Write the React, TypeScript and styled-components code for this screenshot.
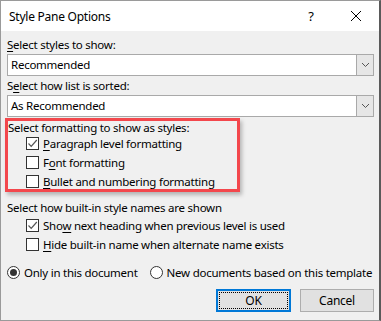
import React from "react";
import styled, { createGlobalStyle } from "styled-components";

const Global = createGlobalStyle`
  html, body { margin: 0; padding: 0; background: #f0f0f0; }
  * { box-sizing: border-box; }
`;

const Window = styled.div`
  width: 381px;
  height: 321px;
  border: 1px solid #9a9a9a;
  border-right: 2px solid #5a5a5a;
  background: #f0f0f0;
  font-family: "Noto Sans", "Open Sans", sans-serif;
  font-size: 11.5px;
  letter-spacing: -0.25px;
  color: #000;
  display: flex;
  flex-direction: column;
  overflow: hidden;
`;

const TitleBar = styled.div`
  height: 30px;
  background: #fff;
  display: flex;
  align-items: center;
  padding-left: 8px;
  flex-shrink: 0;
`;

const Title = styled.div`
  flex: 1;
  font-size: 12px;
`;

const TitleButton = styled.div<{ $w: number }>`
  width: ${(p) => p.$w}px;
  height: 30px;
  display: flex;
  align-items: center;
  justify-content: center;
  font-size: 13px;
`;

const Body = styled.div`
  padding: 6px 6px 0 6px;
  display: flex;
  flex-direction: column;
`;

const Label = styled.div<{ $mt?: number; $h?: number }>`
  height: ${(p) => p.$h ?? 16}px;
  line-height: ${(p) => p.$h ?? 16}px;
  margin-top: ${(p) => p.$mt ?? 0}px;
  white-space: nowrap;
`;

const Select = styled.div`
  height: 22px;
  margin-top: 1px;
  border: 1px solid #a9a9a9;
  background: #fff;
  display: flex;
  align-items: stretch;
  width: 367px;
`;

const SelectText = styled.div`
  flex: 1;
  padding-left: 3px;
  line-height: 20px;
`;

const SelectButton = styled.div`
  width: 17px;
  background: #e6e6e6;
  border-left: 1px solid #a9a9a9;
  display: flex;
  align-items: center;
  justify-content: center;
`;

const Highlight = styled.div`
  margin-top: 1px;
  margin-left: -2px;
  width: 235px;
  border: 3px solid #f3474c;
  box-shadow: 2px 3px 4px rgba(0, 0, 0, 0.25);
`;

const Group = styled.div<{ $mt?: number }>`
  display: flex;
  flex-direction: column;
  gap: 3px;
  margin-top: ${(p) => p.$mt ?? 0}px;
`;

const CheckRow = styled.label<{ $indent: number }>`
  display: flex;
  align-items: center;
  height: 16px;
  padding-left: ${(p) => p.$indent}px;
  gap: 4px;
  white-space: nowrap;
`;

const Box = styled.span`
  width: 13px;
  height: 13px;
  border: 1px solid #333;
  background: #fff;
  display: inline-flex;
  align-items: center;
  justify-content: center;
  flex-shrink: 0;
`;

const RadioRow = styled.div`
  display: flex;
  align-items: center;
  height: 16px;
  margin-top: 12px;
  gap: 12px;
`;

const Radio = styled.span`
  display: inline-flex;
  align-items: center;
  gap: 4px;
  white-space: nowrap;
`;

const RadioCircle = styled.span<{ $on?: boolean }>`
  width: 13px;
  height: 13px;
  border-radius: 50%;
  border: 1px solid #333;
  background: #fff;
  display: inline-flex;
  align-items: center;
  justify-content: center;
  &::after {
    content: "";
    width: 7px;
    height: 7px;
    border-radius: 50%;
    background: ${(p) => (p.$on ? "#333" : "transparent")};
  }
`;

const Buttons = styled.div`
  display: flex;
  justify-content: flex-end;
  gap: 9px;
  margin-top: 9px;
  width: 367px;
`;

const Button = styled.div<{ $default?: boolean }>`
  width: ${(p) => (p.$default ? 75 : 74)}px;
  height: 23px;
  background: #e1e1e1;
  border: ${(p) => (p.$default ? "2px solid #0078d7" : "1px solid #adadad")};
  display: flex;
  align-items: center;
  justify-content: center;
  padding: 1px;
  font-size: 12px;
`;

const Focus = styled.div`
  width: 100%;
  height: 100%;
  border: 1px dotted #000;
  display: flex;
  align-items: center;
  justify-content: center;
`;

const U = styled.span`
  text-decoration: underline;
  text-underline-offset: 2px;
`;

const Chevron = () => (
  <svg width="9" height="6" viewBox="0 0 9 6">
    <path d="M1 1 L4.5 4.5 L8 1" fill="none" stroke="#555" strokeWidth="1" />
  </svg>
);

const Check = () => (
  <svg width="11" height="11" viewBox="0 0 11 11">
    <path d="M1.5 5.5 L4.2 8.3 L9.8 2" fill="none" stroke="#555" strokeWidth="1.2" />
  </svg>
);

const Checkbox = ({
  on,
  indent,
  children,
}: {
  on?: boolean;
  indent: number;
  children: React.ReactNode;
}) => (
  <CheckRow $indent={indent}>
    <Box>{on && <Check />}</Box>
    <span>{children}</span>
  </CheckRow>
);

export default function App() {
  return (
    <>
      <Global />
      <Window>
        <TitleBar>
          <Title>Style Pane Options</Title>
          <TitleButton $w={44}>?</TitleButton>
          <TitleButton $w={46}>
            <svg width="12" height="12" viewBox="0 0 12 12">
              <path d="M1 1 L11 11 M11 1 L1 11" stroke="#000" strokeWidth="1" />
            </svg>
          </TitleButton>
        </TitleBar>
        <Body>
          <Label $mt={0}>
            <U>S</U>elect styles to show:
          </Label>
          <Select>
            <SelectText>Recommended</SelectText>
            <SelectButton>
              <Chevron />
            </SelectButton>
          </Select>
          <Label $mt={2}>
            S<U>e</U>lect how list is sorted:
          </Label>
          <Select>
            <SelectText>As Recommended</SelectText>
            <SelectButton>
              <Chevron />
            </SelectButton>
          </Select>
          <Highlight>
            <Label $h={14}>Select formatting to show as styles:</Label>
            <Group>
              <Checkbox on indent={18}>
                <U>P</U>aragraph level formatting
              </Checkbox>
              <Checkbox indent={18}>
                F<U>o</U>nt formatting
              </Checkbox>
              <Checkbox indent={18}>
                <U>B</U>ullet and numbering formatting
              </Checkbox>
            </Group>
          </Highlight>
          <Label $mt={9} $h={14}>
            Select how built-in style names are shown
          </Label>
          <Group $mt={2}>
            <Checkbox on indent={19}>
              Sho<U>w</U> next heading when previous level is used
            </Checkbox>
            <Checkbox indent={19}>
              <U>H</U>ide built-in name when alternate name exists
            </Checkbox>
          </Group>
          <RadioRow>
            <Radio>
              <RadioCircle $on />
              Only in this document
            </Radio>
            <Radio>
              <RadioCircle />
              New documents based on this template
            </Radio>
          </RadioRow>
          <Buttons>
            <Button $default>
              <Focus>OK</Focus>
            </Button>
            <Button>Cancel</Button>
          </Buttons>
        </Body>
      </Window>
    </>
  );
}
